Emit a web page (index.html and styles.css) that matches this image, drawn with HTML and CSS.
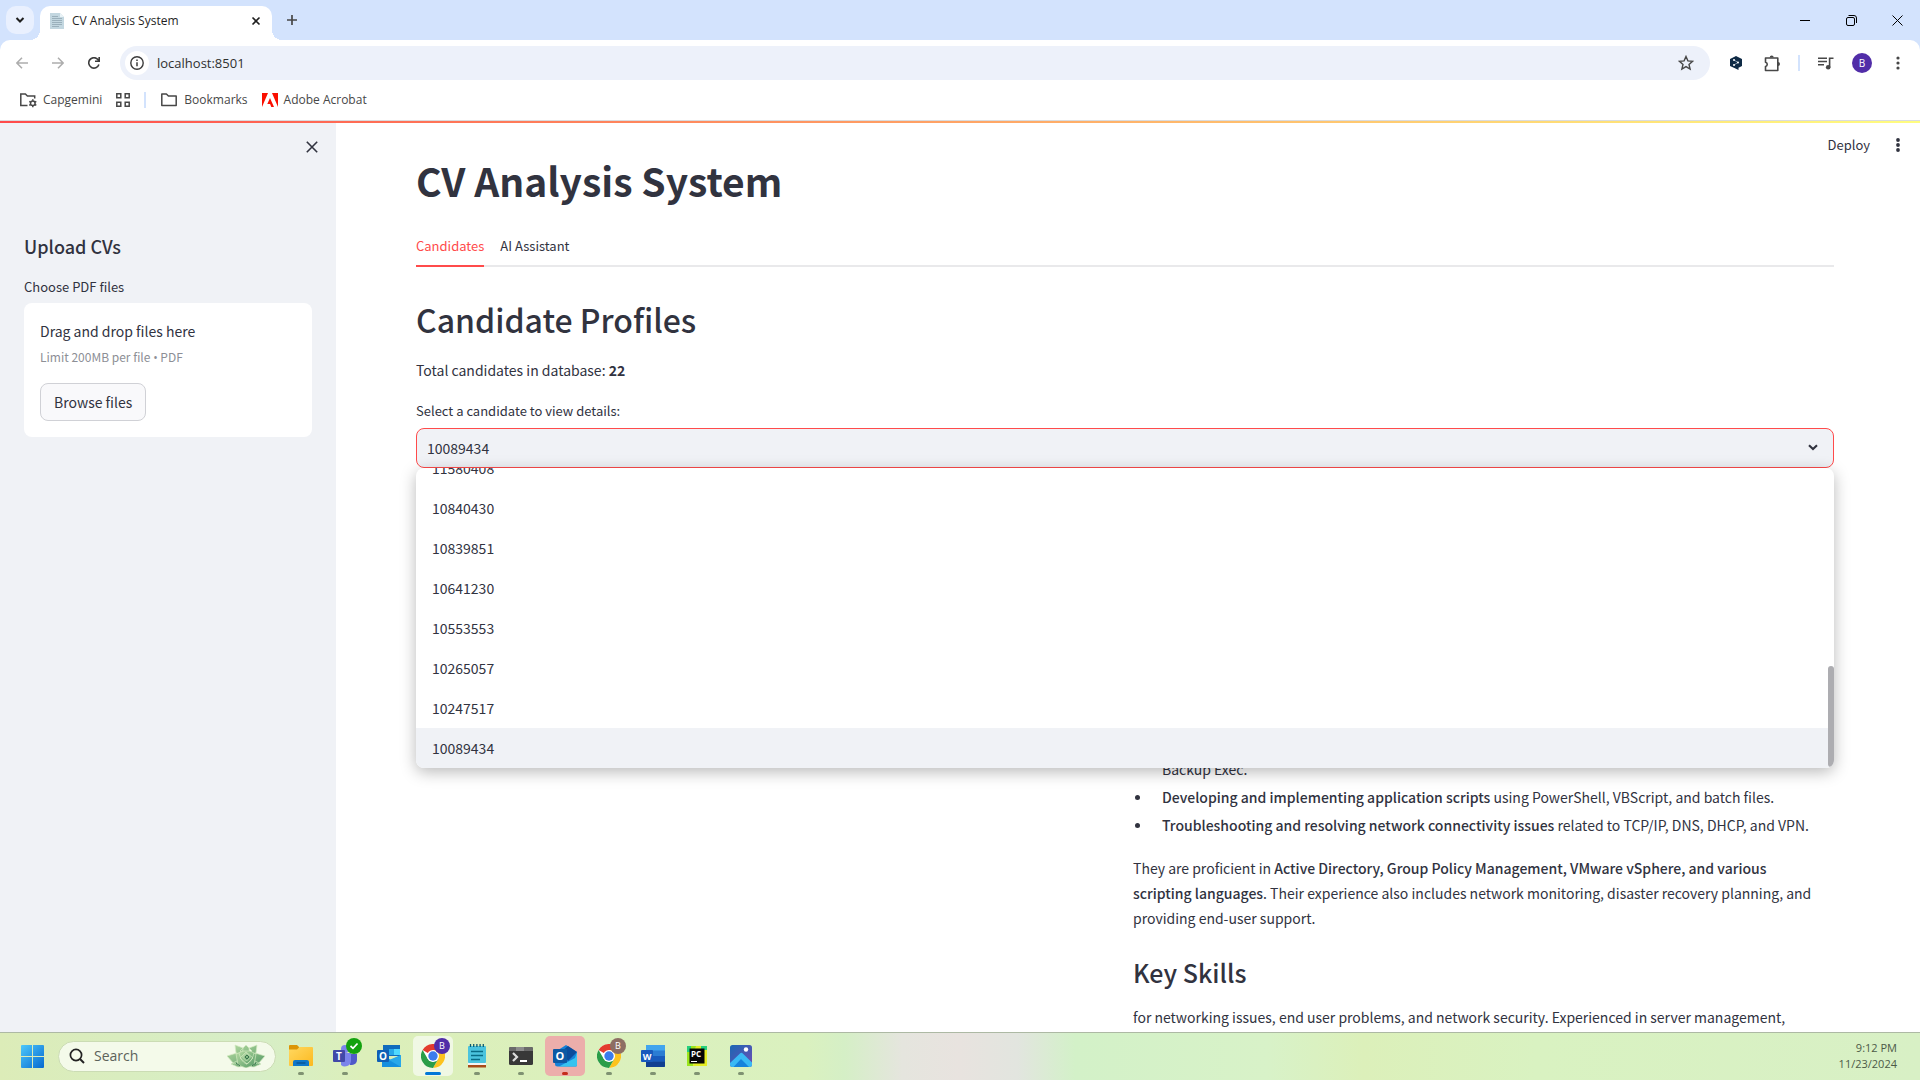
FILE: index.html
```html
<!DOCTYPE html>
<html lang="en">
<head>
<meta charset="utf-8">
<meta name="viewport" content="width=device-width, initial-scale=1">
<title>CV Analysis System</title>
<link rel="stylesheet" href="styles.css">
</head>
<body>
<svg class="defs" aria-hidden="true">
  <defs>
    <linearGradient id="g-win" x1="0" y1="0" x2="1" y2="1"><stop offset="0" stop-color="#4cc8fb"/><stop offset="1" stop-color="#0669d0"/></linearGradient>
    <linearGradient id="g-folder" x1="0" y1="0" x2="1" y2="1"><stop offset="0" stop-color="#ffd861"/><stop offset="1" stop-color="#fcb91f"/></linearGradient>
    <linearGradient id="g-leaf" x1="0" y1="0" x2="1" y2="1"><stop offset="0" stop-color="#b7dca3"/><stop offset="1" stop-color="#569a66"/></linearGradient>
    <linearGradient id="g-photo" x1="0" y1="0" x2="1" y2="1"><stop offset="0" stop-color="#1a68b4"/><stop offset="1" stop-color="#6f4cb4"/></linearGradient>
    <symbol id="chrome" viewBox="0 0 24 24">
      <circle cx="12" cy="12" r="12" fill="#fff"/>
      <path d="M12 12L1.6 6A12 12 0 0 1 22.4 6H12z" fill="#e33b2e"/>
      <path d="M22.4 6A12 12 0 0 1 12 24l5.2-9L12 6z" fill="#fcc31e"/>
      <path d="M1.6 6A12 12 0 0 0 12 24l5.2-9-5.2 3-5.2-3z" fill="#2a9d48"/>
      <circle cx="12" cy="12" r="6" fill="#fff"/>
      <circle cx="12" cy="12" r="4.7" fill="#3b7cec"/>
    </symbol>
    <symbol id="folder" viewBox="0 0 18 16"><path d="M1.8 2h4.6l2 2h7.8v9.5H1.8z" fill="none" stroke="#474747" stroke-width="1.5" stroke-linejoin="round"/></symbol>
  </defs>
</svg>

<header class="browser">
  <div class="tabstrip">
    <button class="tab-search" aria-label="Search tabs"><svg width="10" height="8" viewBox="0 0 10 8"><path d="M1.5 2l3.500 3.500L8.500 2" fill="none" stroke="#1f1f1f" stroke-width="2"/></svg></button>
    <div class="tab">
      <svg width="14" height="16" viewBox="0 0 14 16"><path d="M0 0h10l4 4v12H0z" fill="#c3d7e0"/><path d="M10 0l4 4h-4z" fill="#eaf3f7"/><path d="M2 3.500h6M2 5.500h10M2 7.500h10M2 9.500h10M2 11.500h10M2 13.500h7" stroke="#9bb0bb"/></svg>
      <span class="tab-title">CV Analysis System</span>
      <button class="plain" aria-label="Close tab"><svg width="10" height="10" viewBox="0 0 10 10"><path d="M1.500 1.500l7 7M8.500 1.500l-7 7" stroke="#1f1f1f" stroke-width="1.600"/></svg></button>
    </div>
    <button class="plain new-tab" aria-label="New tab"><svg width="12" height="12" viewBox="0 0 12 12"><path d="M6 1v10M1 6h10" stroke="#474747" stroke-width="1.700"/></svg></button>
    <div class="window-buttons">
      <button aria-label="Minimize"><svg width="10" height="10" viewBox="0 0 10 10"><path d="M0 5.500h10" stroke="#000"/></svg></button>
      <button aria-label="Restore"><svg width="11" height="11" viewBox="0 0 11 11" fill="none" stroke="#000"><rect x=".5" y="2.500" width="8" height="8" rx="1.500"/><path d="M2.500 .5H8a2.500 2.500 0 0 1 2.500 2.500v5"/></svg></button>
      <button aria-label="Close"><svg width="11" height="11" viewBox="0 0 11 11"><path d="M.5 .5l10 10M10.500 .5l-10 10" stroke="#000"/></svg></button>
    </div>
  </div>
  <div class="toolbar">
    <div class="nav">
      <button aria-label="Back"><svg width="12" height="12" viewBox="0 0 12 12" fill="none" stroke="#adadad" stroke-width="1.500"><path d="M12 6H1M6 .8L.9 6 6 11.200"/></svg></button>
      <button aria-label="Forward"><svg width="12" height="12" viewBox="0 0 12 12" fill="none" stroke="#adadad" stroke-width="1.500"><path d="M0 6h11M6 .8L11.100 6 6 11.200"/></svg></button>
      <button aria-label="Reload"><svg width="12" height="12" viewBox="0 0 12 12" fill="none" stroke="#3c3c3c" stroke-width="1.600"><path d="M10.900 7.500A5.200 5.200 0 1 1 9.900 2.500L11 3.800M11.200 0v4.200H7"/></svg></button>
    </div>
    <div class="omnibox">
      <button class="site-info" aria-label="Site information"><svg width="14" height="14" viewBox="0 0 14 14"><circle cx="7" cy="7" r="6.200" fill="none" stroke="#3c3c3c" stroke-width="1.400"/><path d="M7 6.200v4M7 3.600v1.400" stroke="#3c3c3c" stroke-width="1.500"/></svg></button>
      <input class="url" type="text" value="localhost:8501" aria-label="Address">
      <button class="plain" aria-label="Bookmark this tab"><svg width="16" height="16" viewBox="0 0 16 16"><path d="M8 1.500l1.900 4.400 4.700.4-3.600 3.100 1.100 4.700L8 11.600l-4.100 2.500L5 9.400 1.400 6.300l4.700-.4z" fill="none" stroke="#474747" stroke-width="1.400"/></svg></button>
    </div>
    <div class="actions">
      <button aria-label="Translate"><svg width="12" height="14" viewBox="0 0 12 14"><path d="M6 0l6 3v7l-3.500 1.800v2.200l-3-1.600L0 10V3z" fill="#0f2b46"/><path d="M4 4l4 2.500L4 9" fill="none" stroke="#9fb4c8" stroke-width=".8"/><circle cx="4" cy="4" r="1" fill="#fff"/><circle cx="8" cy="6.500" r="1" fill="#fff"/><circle cx="4" cy="9" r="1" fill="#fff"/></svg></button>
      <button aria-label="Extensions"><svg width="17" height="17" viewBox="0 0 17 17"><path d="M1.500 3h12.300v4.500h0v3h0V15.500H1.500v-4a2.200 2.200 0 0 0 0-4.300z" fill="none" stroke="#474747" stroke-width="1.600" stroke-linejoin="round"/><path d="M5.700 2.500a2 2 0 0 1 4 0zM14 7a2 2 0 0 1 0 4z" fill="#474747"/></svg></button>
      <span class="divider"></span>
      <button aria-label="Media controls"><svg width="16" height="13" viewBox="0 0 16 13"><path d="M0 1.200h9M0 4.500h9M0 7.800h6" stroke="#474747" stroke-width="1.500"/><path d="M11.600 10V1.200H15.500" fill="none" stroke="#474747" stroke-width="1.600"/><circle cx="10.200" cy="10.200" r="2.300" fill="#474747"/></svg></button>
      <button class="avatar" aria-label="Profile">B</button>
      <button aria-label="Browser menu"><svg width="4" height="14" viewBox="0 0 4 14" fill="#474747"><circle cx="2" cy="2" r="1.600"/><circle cx="2" cy="7" r="1.600"/><circle cx="2" cy="12" r="1.600"/></svg></button>
    </div>
  </div>
  <nav class="bookmarks">
    <a href="#"><svg width="18" height="16" viewBox="0 0 18 16"><path d="M8.500 13.500H1.800V2h4.600l2 2h7.300v2.500" fill="none" stroke="#474747" stroke-width="1.500"/><circle cx="13.800" cy="11.300" r="2.300" fill="none" stroke="#474747" stroke-width="1.500"/><path d="M13.800 7.300v1.500M13.800 13.800v1.500M10.300 9.300l1.300.8M16 12.500l1.300.8M10.300 13.300l1.300-.8M16 10.100l1.300-.8" stroke="#474747" stroke-width="1.500"/></svg>Capgemini</a>
    <a href="#" aria-label="Apps"><svg width="14" height="14" viewBox="0 0 14 14" fill="none" stroke="#474747" stroke-width="1.500"><path d="M.8.800h4v4h-4zM9.200.8h4v4h-4zM.8 9.200h4v4h-4zM9.200 9.200h4v4h-4z"/></svg></a>
    <span class="divider"></span>
    <a href="#"><svg width="18" height="16"><use href="#folder"/></svg>Bookmarks</a>
    <a href="#"><svg width="16" height="14" viewBox="0 0 16 14" fill="#fa0f00"><path d="M0 0h6L0 14zM10 0h6v14zM8 5l4 9H9.300l-1.200-3H5.300z"/></svg>Adobe Acrobat</a>
  </nav>
</header>

<div class="app">
  <aside class="sidebar">
    <button class="plain sidebar-close" aria-label="Close sidebar"><svg width="12" height="12" viewBox="0 0 12 12"><path d="M.8.800l10.400 10.400M11.200.8L.8 11.200" stroke="#31333f" stroke-width="1.600"/></svg></button>
    <h2 class="upload-title">Upload CVs</h2>
    <label class="field-label" for="browse">Choose PDF files</label>
    <section class="dropzone">
      <div class="drop-text">Drag and drop files here</div>
      <small class="drop-limit">Limit 200MB per file <span class="dot">•</span> PDF</small>
      <button class="browse" id="browse">Browse files</button>
    </section>
  </aside>
  <main class="main">
    <div class="app-menu">
      <button class="deploy">Deploy</button>
      <button aria-label="App menu"><svg width="4" height="14" viewBox="0 0 4 14" fill="#31333f"><circle cx="2" cy="2" r="1.900"/><circle cx="2" cy="7" r="1.900"/><circle cx="2" cy="12" r="1.900"/></svg></button>
    </div>
    <h1 class="title">CV Analysis System</h1>
    <div class="tabs" role="tablist">
      <button class="tab-link active" role="tab" aria-selected="true">Candidates</button>
      <button class="tab-link" role="tab" aria-selected="false">AI Assistant</button>
    </div>
    <h2 class="section-title">Candidate Profiles</h2>
    <p class="total">Total candidates in database: <strong>22</strong></p>
    <label class="field-label" for="candidate">Select a candidate to view details:</label>
    <div class="picker">
      <select class="candidate" id="candidate"><option>10089434</option></select>
      <svg class="chevron" width="10" height="7" viewBox="0 0 10 7"><path d="M1 1.200l4 3.800 4-3.800" fill="none" stroke="#31333f" stroke-width="2.100"/></svg>
      <div class="menu">
        <ul class="options" role="listbox" aria-label="Candidates">
          <li role="option">11580408</li>
          <li role="option">10840430</li>
          <li role="option">10839851</li>
          <li role="option">10641230</li>
          <li role="option">10553553</li>
          <li role="option">10265057</li>
          <li role="option">10247517</li>
          <li role="option" class="selected" aria-selected="true">10089434</li>
        </ul>
        <span class="thumb"></span>
      </div>
    </div>
    <div class="details">
      <div></div>
      <article class="summary">
        <ul>
          <li class="continued">Backup Exec.</li>
          <li><strong>Developing and implementing application scripts</strong> using PowerShell, VBScript, and batch files.</li>
          <li><strong>Troubleshooting and resolving network connectivity issues</strong> related to TCP/IP, DNS, DHCP, and VPN.</li>
        </ul>
        <p>They are proficient in <strong>Active Directory, Group Policy Management, VMware vSphere, and various scripting languages</strong>. Their experience also includes network monitoring, disaster recovery planning, and providing end-user support.</p>
        <h3>Key Skills</h3>
        <p>for networking issues, end user problems, and network security. Experienced in server management,</p>
      </article>
    </div>
  </main>
</div>

<footer class="taskbar">
  <button class="task start" aria-label="Start"><svg width="23" height="23" viewBox="0 0 23 23" fill="url(#g-win)"><path d="M1 0h10v11H0V1a1 1 0 0 1 1-1zM12 0h10a1 1 0 0 1 1 1v10H12zM0 12h11v11H1a1 1 0 0 1-1-1zM12 12h11v10a1 1 0 0 1-1 1H12z"/></svg></button>
  <label class="search">
    <svg width="16" height="16" viewBox="0 0 16 16" fill="none" stroke="#222"><circle cx="7" cy="7" r="5.600" stroke-width="1.700"/><path d="M11 11l4 4" stroke-width="2"/></svg>
    <input type="search" placeholder="Search" aria-label="Search">
    <svg width="38" height="24" viewBox="0 0 38 24"><g fill="url(#g-leaf)" stroke="#d3eac0" stroke-width=".7"><path d="M0 12l10-3 6 9-9 2zM38 12l-10-3-6 9 9 2zM8 1l8 3-1 9-6-4zM30 1l-8 3 1 9 6-4zM4 20l8-4 7 6-8 1zM34 20l-8-4-7 6 8 1zM19 1l6 6-6 5-6-5z"/><path d="M19 24l-8-3-2-11 7-3h7l6 3-2 11z"/><path d="M12 9c2 8 5 10 8 11M27 9c-2 8-5 10-8 11M13 14l6-6 7 6-6 6z"/><path d="M15.500 13l4-4 4 4-4 4z"/></g><path d="M18 13l2-2 2 2-2 2zM9 19l4 3M29 19l-4 3" stroke="#38734c" fill="none"/></svg>
  </label>
  <nav class="tasks">
    <button class="task open" aria-label="File Explorer"><svg width="24" height="24" viewBox="0 0 24 24"><path d="M1 1h7l2 2v5H0V2a1 1 0 0 1 1-1z" fill="#dc9506"/><path d="M0 5.500h8L10.500 3H23a1 1 0 0 1 1 1v17a1 1 0 0 1-1 1H1a1 1 0 0 1-1-1z" fill="url(#g-folder)"/><path d="M4 22v-4a2 2 0 0 1 2-2h12a2 2 0 0 1 2 2v4z" fill="#1077c9"/><path d="M7.500 19h9" stroke="#0a4d8c" stroke-width="1.200"/></svg></button>
    <button class="task open" aria-label="Teams"><svg width="24" height="24" viewBox="0 0 24 24"><circle cx="12" cy="5" r="4" fill="#7b83eb"/><path d="M17 10h7v6a5 5 0 0 1-5 5h-2z" fill="#5059c9"/><path d="M8 9h10v8a6 6 0 0 1-10 4z" fill="#7b83eb"/><rect y="6" width="12" height="12" rx="1" fill="#4148a8"/><text x="6" y="15.500" class="glyph" font-size="10">T</text></svg><span class="badge ok"><svg width="10" height="8" viewBox="0 0 10 8"><path d="M1.500 4L4 6.300 8.500 1.500" fill="none" stroke="#fff" stroke-width="1.700"/></svg></span></button>
    <button class="task" aria-label="Outlook"><svg width="24" height="24" viewBox="0 0 24 24"><path d="M6 1h17v11H6z" fill="#0f6cbd"/><path d="M12 5h5v6h-5z" fill="#28a8ea"/><path d="M17 5h6v6h-6z" fill="#50d9ff"/><path d="M5 11l9 5 10-5v12H5z" fill="#1490df"/><path d="M24 11v12L12 16z" fill="#28a8ea"/><rect y="6" width="12" height="12" rx="1" fill="#0f5fb5"/><text x="6" y="15.500" class="glyph" font-size="10">O</text></svg></button>
    <button class="task open current" aria-label="Chrome"><svg width="24" height="24"><use href="#chrome"/></svg><span class="badge work">B</span></button>
    <button class="task open" aria-label="Notepad"><svg width="24" height="24" viewBox="0 0 24 24"><path d="M3 20h18v3.500H3z" fill="#a84b19"/><path d="M3 19h18v2H3z" fill="#f4f4f4"/><rect x="3" y="2" width="18" height="17" rx="1" fill="#4bc4de"/><path d="M6 7.500h12M6 11.500h12M6 15.500h9" stroke="#086c86" stroke-width="1.400"/><path d="M5.500 0v3M8.700 0v3M11.900 0v3M15.100 0v3M18.300 0v3" stroke="#0c5a70" stroke-width="1.300"/></svg></button>
    <button class="task open" aria-label="Terminal"><svg width="24" height="24" viewBox="0 0 24 24"><rect y="3" width="24" height="18" rx="1.500" fill="#383838"/><path d="M1.500 3h21A1.500 1.500 0 0 1 24 4.500V7H0V4.500A1.500 1.500 0 0 1 1.500 3z" fill="#6a6a6a"/><path d="M7 3h8v4H7z" fill="#8c8c8c"/><path d="M4 9l4 4-4 4" fill="none" stroke="#ddd" stroke-width="2.200"/><path d="M11 17h7" stroke="#fff" stroke-width="2"/></svg></button>
    <button class="task open alert" aria-label="Outlook (new)"><svg width="24" height="24" viewBox="0 0 24 24"><path d="M2 8l11-7 11 7v13a1.500 1.500 0 0 1-1.500 1.500h-18A2.500 2.500 0 0 1 2 20z" fill="#1581d8"/><path d="M9 7l6-5 9 6-9 9z" fill="#0b4c9c"/><path d="M24 8v13a1.500 1.500 0 0 1-1.500 1.500H6L22 14z" fill="#35c3f0"/><rect y="5" width="14" height="14" rx="1" fill="#0c59a4"/><text x="7" y="15.500" class="glyph" font-size="11">O</text></svg></button>
    <button class="task open" aria-label="Chrome (second profile)"><svg width="24" height="24"><use href="#chrome"/></svg><span class="badge home">B</span></button>
    <button class="task open" aria-label="Word"><svg width="24" height="24" viewBox="0 0 24 24"><rect x="5" y="1" width="19" height="22" rx="1" fill="#2b7cd3"/><path d="M5 1h19v5.500H5z" fill="#41a5ee"/><path d="M5 12h19v5.500H5z" fill="#185abd"/><path d="M5 17.500h19V22a1 1 0 0 1-1 1H5z" fill="#103f91"/><rect y="6" width="12" height="12" rx="1" fill="#185abd"/><text x="6" y="15.500" class="glyph" font-size="9">W</text></svg></button>
    <button class="task open" aria-label="PyCharm"><svg width="24" height="24" viewBox="0 0 24 24"><path d="M2 2h9l-3 20H2z" fill="#9be51c"/><path d="M11 2h11v20H8z" fill="#e5ed25"/><path d="M2 2h4v6H2zM16 2h6v4h-6z" fill="#26d07c"/><rect x="4.500" y="4.500" width="15" height="15" fill="#050505"/><text x="11" y="12.500" class="glyph" font-size="8">PC</text><path d="M6 17.500h6" stroke="#fff"/></svg></button>
    <button class="task open" aria-label="Photos"><svg width="24" height="24" viewBox="0 0 24 24"><rect x="1" y="1" width="22" height="22" rx="2.500" fill="url(#g-photo)"/><path d="M1 19L11 9.500a2 2 0 0 1 2.800 0L23 18.500v2A2.500 2.500 0 0 1 20.500 23h-17A2.500 2.500 0 0 1 1 20.500z" fill="#39b9f5"/><path d="M12 15l8 8H4.500z" fill="#1583dc"/><circle cx="17" cy="5.500" r="2.200" fill="#fff"/></svg></button>
  </nav>
  <div class="clock"><time>9:12 PM</time><time>11/23/2024</time></div>
</footer>
</body>
</html>
```
FILE: styles.css
```css
* { box-sizing: border-box; }

body {
  margin: 0;
  height: 100vh;
  display: flex;
  flex-direction: column;
  overflow: hidden;
  background: #fff;
  color: #31333f;
  font: 14px/26px "Noto Sans CJK SC", sans-serif;
}

button, input, select { font: inherit; color: inherit; margin: 0; }
button { display: flex; align-items: center; justify-content: center; padding: 0; border: 0; background: none; flex: none; }
svg { flex: none; display: block; }
h1, h2, h3, p, ul { margin: 0; padding: 0; }
ul { list-style: none; }
a { color: inherit; text-decoration: none; }
.defs { position: absolute; width: 0; height: 0; }

/* Browser frame */
.browser { flex: none; background: #d3e3fd; font: 12px/16px "Open Sans", sans-serif; color: #474747; }
.tabstrip { display: flex; height: 40px; padding-left: 6px; }
.tab-search { width: 28px; height: 28px; margin-top: 6px; border-radius: 10px; background: #e9f0fe; }
.tab {
  position: relative;
  display: flex;
  align-items: center;
  width: 232px;
  margin: 6px 0 0 6px;
  padding: 0 11px 5px 10px;
  border-radius: 10px 10px 0 0;
  background: #fff;
  color: #1f1f1f;
}
.tab::before, .tab::after { content: ""; position: absolute; bottom: 0; width: 10px; height: 10px; }
.tab::before { right: 100%; background: radial-gradient(circle at 0 0, transparent 10px, #fff 10px); }
.tab::after { left: 100%; background: radial-gradient(circle at 100% 0, transparent 10px, #fff 10px); }
.tab-title { flex: 1; margin-left: 8px; }
.new-tab { width: 28px; margin-left: 6px; }
.window-buttons { display: flex; margin-left: auto; }
.window-buttons button { width: 46px; }

.toolbar { display: flex; align-items: center; height: 46px; padding: 0 4px; border-radius: 10px 10px 0 0; background: #fff; }
.nav { display: flex; width: 116px; }
.nav button { width: 36px; height: 34px; }
.omnibox { flex: 1; display: flex; align-items: center; height: 34px; padding: 0 16px 0 5px; border-radius: 17px; background: #edf1fa; }
.site-info { width: 24px; height: 24px; border-radius: 12px; background: #fff; }
.url { flex: 1; min-width: 0; padding: 0 8px; border: 0; background: none; outline: 0; font-size: 13px; color: #303030; }
.actions { display: flex; align-items: center; margin-left: 8px; }
.actions button { width: 36px; height: 34px; }
.actions .divider { margin: 0 8px; }
.actions .avatar { width: 20px; height: 20px; margin: 0 8px; border-radius: 50%; background: #512da8; color: #fff; font-size: 10px; }
.divider { width: 2px; height: 16px; background: #d3e3fd; }

.bookmarks { display: flex; align-items: center; gap: 14px; height: 35px; padding: 0 19px 6px; border-bottom: 1px solid #dadcdf; background: #fff; }
.bookmarks a { display: flex; align-items: center; gap: 6px; }

/* Streamlit page */
.app { flex: 1; min-height: 0; display: flex; position: relative; overflow: hidden; }
.app::before { content: ""; position: absolute; inset: 0 0 auto; height: 2px; background: linear-gradient(90deg, #ff4b4b, #fffd80); }
.sidebar { flex: none; width: 336px; padding: 14px 24px; background: #f0f2f6; display: flex; flex-direction: column; }
.sidebar-close { align-self: flex-end; width: 24px; height: 24px; margin-right: -12px; }
.upload-title { margin-top: 75px; font-size: 18px; line-height: 24px; font-weight: 500; }
.field-label { display: block; font-size: 13px; line-height: 24px; }
.sidebar .field-label { margin: 17px 0 4px; }
.dropzone { display: flex; flex-direction: column; align-items: flex-start; padding: 16px; border-radius: 8px; background: #fff; }
.drop-text { line-height: 24px; }
.drop-limit { margin-top: 2px; font-size: 12px; line-height: 24px; color: #8d8f96; }
.dot { font-family: "Open Sans", sans-serif; }
.browse { height: 38px; margin-top: 13px; padding: 0 13px; border: 1px solid #d0d1d6; border-radius: 8px; background: #f9f9fb; }

.main { flex: 1; min-width: 0; position: relative; padding: 31px 86px 0 80px; }
.app-menu { position: absolute; top: 12px; right: 20px; display: flex; align-items: center; gap: 26px; font-size: 13px; line-height: 24px; }
.title { font-size: 39px; line-height: 56px; font-weight: 700; }
.tabs { display: flex; gap: 16px; margin-top: 18px; border-bottom: 2px solid #e9e9eb; }
.tab-link { height: 41px; margin-bottom: -2px; border-bottom: 2px solid transparent; font-size: 13px; }
.tab-link.active { color: #ff4b4b; border-color: #ff4b4b; }
.section-title { margin-top: 30px; font-size: 32px; line-height: 44px; font-weight: 500; }
.total { margin: 16px 0; }
.picker { position: relative; margin-top: 5px; }
.candidate { display: block; width: 100%; height: 40px; padding: 0 10px; border: 1px solid #ff4b4b; border-radius: 8px; background: #f0f2f6; appearance: none; outline: 0; }
.chevron { position: absolute; right: 16px; top: 16px; }
.menu { position: absolute; top: 100%; left: 0; right: 0; height: 300px; border-radius: 8px; background: #fff; box-shadow: 0 4px 16px rgba(0, 0, 0, .28); overflow: hidden; z-index: 1; }
.options { display: flex; flex-direction: column; justify-content: flex-end; height: 100%; }
.options li { flex: none; padding: 0 16px; line-height: 40px; }
.options .selected { background: #f0f2f6; }
.thumb { position: absolute; right: 0; bottom: 1px; width: 6px; height: 101px; border-radius: 3px; background: #adadb1; }

.details { display: grid; grid-template-columns: 1fr 1fr; gap: 16px; padding-top: 288px; }
.summary li { position: relative; margin-bottom: 2px; padding-left: 29px; }
.summary li::before { content: ""; position: absolute; left: 2px; top: 11px; width: 5px; height: 5px; border-radius: 50%; background: #31333f; }
.summary .continued::before { display: none; }
.summary p { margin-top: 18px; padding-right: 10px; line-height: 25px; }
.summary strong { font-weight: 500; }
.summary h3 { margin-top: 26px; font-size: 25px; line-height: 30px; font-weight: 500; }

/* Windows taskbar */
.taskbar {
  flex: none;
  display: flex;
  align-items: center;
  gap: 6px;
  height: 48px;
  padding: 0 23px 1px 12px;
  border-top: 1px solid #adb9a4;
  background: linear-gradient(90deg, #dcecb8, #d6eec7 13%, #dcefba 19%, #daf1bf 42%, #d5efc6 44%, #e5e5de 47%, #e8e3df 50%, #e2e5df 53%, #d3f1c8 56%, #d8f2c8 66%, #dcf0ba 71%, #d9f2c1 80%, #d8f0c5);
  font: 12px/16px "Open Sans", sans-serif;
}
.task { position: relative; width: 40px; height: 40px; border-radius: 5px; }
.tasks { display: flex; gap: 4px; margin-left: -1px; }
.task.open::after { content: ""; position: absolute; left: 17px; bottom: 1px; width: 6px; height: 3px; border-radius: 2px; background: #7f9272; }
.task.current { background: #f0f8e4; }
.task.current::after { left: 12px; width: 16px; background: #0078d7; }
.task.alert { background: #ecaeab; }
.task.alert::after { background: #c42b1c; }
.badge { position: absolute; top: 2px; right: 3px; display: grid; place-items: center; width: 16px; height: 16px; border-radius: 50%; color: #fff; font-size: 9px; line-height: 16px; }
.badge.ok { background: #13a10e; }
.badge.work { background: #512da8; }
.badge.home { background: #8d6e63; }
.glyph { fill: #fff; font-family: "Open Sans", sans-serif; font-weight: 700; text-anchor: middle; }
.search { display: flex; align-items: center; width: 218px; height: 31px; padding: 0 10px; border: 1px solid #cbdcb4; border-radius: 16px; background: #f4faea; }
.search input { flex: 1; min-width: 0; padding: 0 9px; border: 0; background: none; outline: 0; font-size: 14px; }
.search input::placeholder { color: #5c625a; opacity: 1; }
.clock { display: flex; flex-direction: column; align-items: flex-end; margin-left: auto; font-size: 11px; color: #4c5a47; }
```
